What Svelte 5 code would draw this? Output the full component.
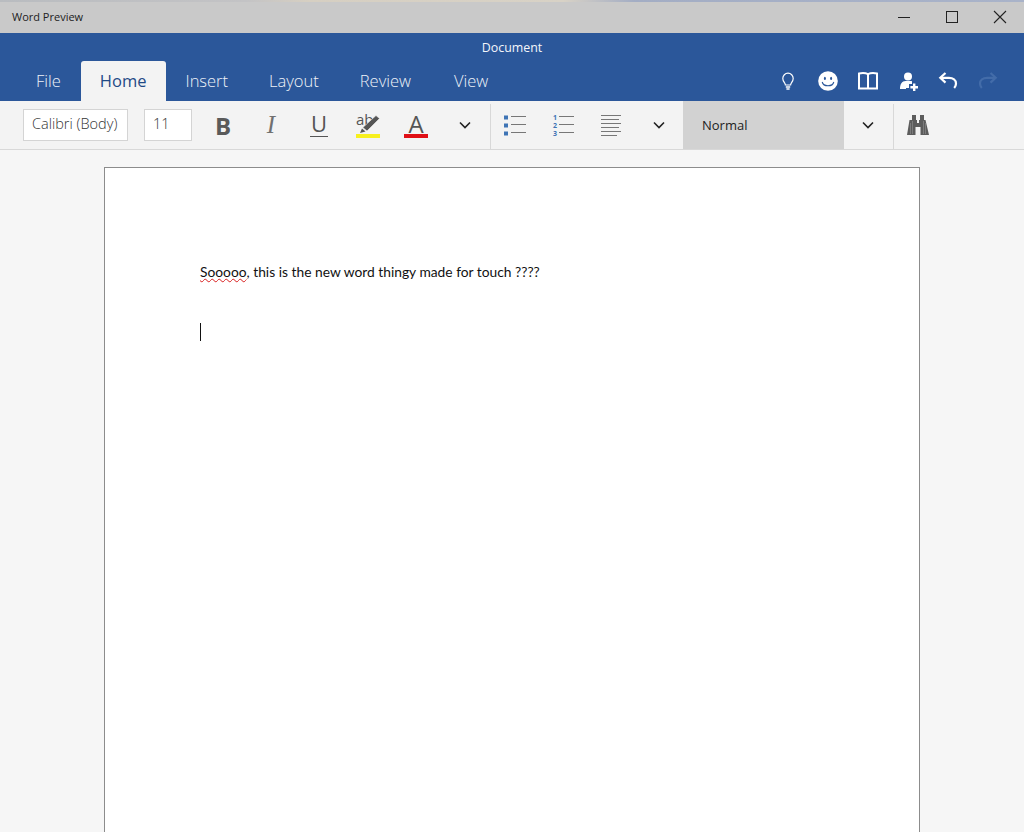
<script>
	const tabs = ["File", "Home", "Insert", "Layout", "Review", "View"];
	const active = "Home";
</script>

<div class="app">
	<div class="wallpaper"></div>
	<header class="titlebar">
		<span class="apptitle">Word Preview</span>
		<div class="winctl">
			<button aria-label="Minimize">
				<svg width="14" height="14" viewBox="0 0 14 14"><path d="M1 7.500h12" stroke="#222" fill="none" /></svg>
			</button>
			<button aria-label="Maximize">
				<svg width="14" height="14" viewBox="0 0 14 14"><rect x="1.500" y="1.500" width="11" height="11" stroke="#222" fill="none" /></svg>
			</button>
			<button aria-label="Close">
				<svg width="14" height="14" viewBox="0 0 14 14"><path d="M1 1l12 12M13 1L1 13" stroke="#222" stroke-width="1.100" fill="none" /></svg>
			</button>
		</div>
	</header>

	<div class="ribbon">
		<div class="doctitle">Document</div>
		<div class="tabrow">
			<nav class="tabs">
				{#each tabs as t}
					<div class="tab" class:active={t === active}>{t}</div>
				{/each}
			</nav>
			<div class="quick">
				<!-- tell me -->
				<span class="qa">
					<svg width="20" height="20" viewBox="0 0 20 20" fill="none" stroke="#fff" stroke-width="1.200">
						<path d="M7.400 14c0-2.200-2.600-3.400-2.600-6.600a5.200 5.200 0 0 1 10.400 0c0 3.200-2.600 4.400-2.600 6.600z" />
						<path d="M7.800 16h4.400M8.400 18h3.200" stroke-width="1.500" />
					</svg>
				</span>
				<!-- feedback -->
				<span class="qa">
					<svg width="20" height="20" viewBox="0 0 20 20">
						<circle cx="10" cy="10" r="9.800" fill="#fff" />
						<ellipse cx="6.900" cy="7.400" rx="1" ry="1.600" fill="#2b579a" />
						<ellipse cx="13.100" cy="7.400" rx="1" ry="1.600" fill="#2b579a" />
						<path d="M4.200 11c1.200 5 10.400 5 11.600 0" fill="none" stroke="#2b579a" stroke-width="1.100" />
					</svg>
				</span>
				<!-- reading view -->
				<span class="qa">
					<svg width="20" height="20" viewBox="0 0 20 20" fill="none" stroke="#fff" stroke-width="2">
						<path d="M1 2.500c3-.6 6.500-.6 9 .6 2.500-1.200 6-1.200 9-.6v15H1z" />
						<path d="M10 3v14.500" />
					</svg>
				</span>
				<!-- share -->
				<span class="qa">
					<svg width="20" height="20" viewBox="0 0 20 20" fill="#fff">
						<circle cx="10" cy="5.500" r="4" />
						<path d="M2 18c0-5 2-8 5.500-8h5c.6 0 1 .1 1.500.3V13h-3v4H8v1z" />
						<path d="M15 12.500h2.400V15H20v2.400h-2.600V20H15v-2.600h-2.600V15H15z" />
					</svg>
				</span>
				<!-- undo -->
				<span class="qa">
					<svg width="20" height="20" viewBox="0 0 20 20" fill="none" stroke="#fff" stroke-width="2.200">
						<path d="M7.500 2L2.300 6.800l5.200 4.800" />
						<path d="M2.800 6.800H11c4 0 7 2.300 7 5.700 0 1.800-.6 3.200-1.800 4.500" />
					</svg>
				</span>
				<!-- redo, disabled -->
				<span class="qa">
					<svg width="20" height="20" viewBox="0 0 20 20" fill="none" stroke="#436ca9" stroke-width="2.200">
						<path d="M12.500 2l5.200 4.800-5.200 4.800" />
						<path d="M17.200 6.800H9c-4 0-7 2.300-7 5.700 0 1.800.6 3.200 1.800 4.500" />
					</svg>
				</span>
			</div>
		</div>
	</div>

	<div class="toolbar">
		<div class="field fontname"><span>Calibri (Body)</span></div>
		<div class="field fontsize"><span>11</span></div>

		<div class="cell bold">B</div>
		<div class="cell italic">I</div>
		<div class="cell"><span class="under">U</span></div>
		<div class="cell">
			<span class="hl">
				<span class="ab">ab</span>
				<svg class="pen" width="22" height="20" viewBox="0 0 22 20">
					<path d="M17 0.500l3.500 3L8 16 3.800 12.500z" fill="#555" stroke="#f3f3f3" stroke-width=".6" />
					<path d="M3 13.500l3.500 3-5.500 1.500z" fill="#555" />
				</svg>
				<span class="bar yellow"></span>
			</span>
		</div>
		<div class="cell">
			<span class="fc">
				<span class="fa">A</span>
				<span class="bar red"></span>
			</span>
		</div>
		<div class="cell morecell">
			<svg class="chev" width="12" height="8" viewBox="0 0 12 8"><path d="M1 1.500l5 5 5-5" /></svg>
		</div>
		<div class="sep"></div>

		<div class="cell">
			<svg width="24" height="24" viewBox="0 0 24 24">
				<path d="M1 2.500h4v4H1zM1 10.500h4v4H1zM1 18.500h4v4H1z" fill="#3f74b5" />
				<path d="M8 3.500h15M8 11.500h15M8 19.500h15" stroke="#777" fill="none" />
			</svg>
		</div>
		<div class="cell">
			<svg width="24" height="24" viewBox="0 0 24 24">
				<text x="2" y="6.500" class="num">1</text>
				<text x="2" y="14.500" class="num">2</text>
				<text x="2" y="22.500" class="num">3</text>
				<path d="M8 3.500h15M8 11.500h15M8 19.500h15" stroke="#777" fill="none" />
			</svg>
		</div>
		<div class="cell">
			<svg width="22" height="24" viewBox="0 0 22 24">
				<path d="M1 2.500h20M1 6.500h18M1 10.500h20M1 14.500h18M1 18.500h20M1 22.500h16" stroke="#777" fill="none" />
			</svg>
		</div>
		<div class="cell">
			<svg class="chev" width="12" height="8" viewBox="0 0 12 8"><path d="M1 1.500l5 5 5-5" /></svg>
		</div>

		<div class="style">Normal</div>
		<div class="cell">
			<svg class="chev" width="12" height="8" viewBox="0 0 12 8"><path d="M1 1.500l5 5 5-5" /></svg>
		</div>
		<div class="sep last"></div>
		<div class="cell">
			<svg width="22" height="20" viewBox="0 0 22 20">
				<path d="M5 0h4v5h1v3h2V5h1V0h4v5h1.500L22 20h-8.500v-8h-5v8H0L2.500 5H5z" fill="#5c5c5c" />
				<path d="M5.500 6v13M16.500 6v13M3.500 8v11M18.500 8v11" stroke="#8a8a8a" stroke-width=".7" fill="none" />
			</svg>
		</div>
	</div>

	<main class="canvas">
		<article class="page">
			<p class="line"><span class="misspelled">Sooooo</span>, this is the new word thingy made for touch ????</p>
			<div class="caret"></div>
		</article>
	</main>
</div>

<style>
	:global(body) {
		margin: 0;
	}
	.app {
		width: 1024px;
		height: 832px;
		overflow: hidden;
		background: #f6f6f6;
		font-family: "Open Sans", "Noto Sans", sans-serif;
		display: flex;
		flex-direction: column;
	}
	.wallpaper {
		height: 2px;
		background: linear-gradient(90deg, #b9bcc0 0, #c3c3c5 24%, #d6cfc2 30%, #d8d2c6 55%, #a3adc4 62%, #a9b3c9 100%);
	}
	.titlebar {
		box-sizing: border-box;
		height: 31px;
		padding-bottom: 2px;
		background: #c9c9c9;
		display: flex;
		align-items: center;
		justify-content: space-between;
	}
	.apptitle {
		margin-left: 12px;
		font-size: 11px;
		color: #222;
	}
	.winctl {
		display: flex;
		height: 100%;
	}
	.winctl button {
		width: 48px;
		border: 0;
		padding: 0;
		background: none;
		display: flex;
		align-items: center;
		justify-content: center;
	}

	.ribbon {
		height: 68px;
		background: #2b579a;
		display: flex;
		flex-direction: column;
		color: #fff;
	}
	.doctitle {
		height: 28px;
		line-height: 29px;
		text-align: center;
		font-size: 12.400px;
		color: #f4f6fa;
	}
	.tabrow {
		flex: 1;
		display: flex;
		justify-content: space-between;
		align-items: stretch;
	}
	.tabs {
		display: flex;
		padding-left: 16px;
	}
	.tab {
		padding: 0 20.500px;
		font-size: 16.500px;
		font-weight: 300;
		line-height: 40px;
		color: #eef2f8;
	}
	.tab:first-child {
		padding: 0 19px 0 20px;
	}
	.tab.active {
		background: #f3f3f3;
		color: #1f4a86;
		font-weight: 400;
		border-radius: 3px 3px 0 0;
		margin-left: 1px;
		padding: 0 20px 0 19px;
	}
	.tab.active + .tab {
		padding-left: 19px;
	}
	.tab:last-child {
		padding-left: 22.500px;
	}
	.quick {
		display: flex;
		align-items: center;
		padding-right: 16px;
		padding-bottom: 1px;
	}
	.qa {
		width: 40px;
		display: flex;
		justify-content: center;
	}

	.toolbar {
		height: 48px;
		background: #f3f3f3;
		border-bottom: 1px solid #d8d8d8;
		display: flex;
		align-items: stretch;
		padding-left: 23px;
		color: #555;
	}
	.field {
		align-self: center;
		box-sizing: border-box;
		height: 32px;
		background: #fff;
		border: 1px solid #d4d4d4;
		font-size: 14.500px;
		font-weight: 300;
		line-height: 28px;
		padding-left: 8px;
		color: #333;
		overflow: hidden;
		white-space: nowrap;
	}
	.fontname {
		width: 105px;
		margin-right: 16px;
	}
	.fontname span {
		display: block;
		width: 87px;
		overflow: hidden;
	}
	.fontsize {
		width: 48px;
		margin-right: 7px;
	}
	.cell {
		width: 48px;
		flex: none;
		display: flex;
		align-items: center;
		justify-content: center;
	}
	.morecell {
		margin-left: 2px;
		margin-right: 1px;
	}
	.bold {
		font-weight: 700;
		font-size: 24px;
		color: #5a5a5a;
	}
	.italic {
		font-family: "Liberation Serif", serif;
		font-style: italic;
		font-size: 25px;
		color: #707070;
	}
	.under {
		font-size: 22px;
		font-weight: 400;
		line-height: 21px;
		color: #555;
		border-bottom: 1px solid #555;
		padding: 0 1px 2px;
	}
	.hl,
	.fc {
		position: relative;
		width: 24px;
		height: 30px;
		display: block;
	}
	.hl {
		left: 1px;
	}
	.fc {
		left: 1px;
	}
	.ab {
		position: absolute;
		left: 0;
		top: 0;
		font-size: 15px;
		line-height: 18px;
		color: #555;
	}
	.pen {
		position: absolute;
		left: 3px;
		top: 5px;
	}
	.fa {
		position: absolute;
		left: 0;
		right: 0;
		top: 0;
		text-align: center;
		font-size: 24px;
		font-weight: 400;
		line-height: 28px;
		color: #555;
	}
	.bar {
		position: absolute;
		left: 0;
		right: 0;
		bottom: 2px;
		height: 4px;
	}
	.yellow {
		background: #f7f01e;
	}
	.red {
		background: #e00f16;
	}
	.chev path {
		fill: none;
		stroke: #222;
		stroke-width: 1.600;
	}
	.num {
		font-size: 7px;
		font-family: "Open Sans", sans-serif;
		font-weight: 700;
		fill: #3f74b5;
	}
	.sep {
		width: 1px;
		flex: none;
		background: #d8d8d8;
		margin: 3px 0 0;
	}
	.sep.last {
		margin-left: 1px;
	}
	.style {
		width: 161px;
		box-sizing: border-box;
		background: #d2d2d2;
		color: #222;
		font-size: 13px;
		line-height: 48px;
		padding-left: 19px;
		flex: none;
	}

	.canvas {
		flex: 1;
		padding: 17px 104px 0;
		min-height: 0;
	}
	.page {
		box-sizing: border-box;
		width: 816px;
		height: 1056px;
		background: #fff;
		border: 1px solid #8c8c8c;
		padding: 94px 0 0 95px;
		font-family: Lato, Carlito, sans-serif;
		color: #111;
	}
	.line {
		margin: 0;
		font-size: 13.800px;
		line-height: 20px;
	}
	.misspelled {
		text-decoration: underline wavy #d81e1e 1px;
		text-underline-offset: 1px;
	}
	.caret {
		width: 1px;
		height: 18px;
		margin-top: 41px;
		background: #111;
	}
</style>
